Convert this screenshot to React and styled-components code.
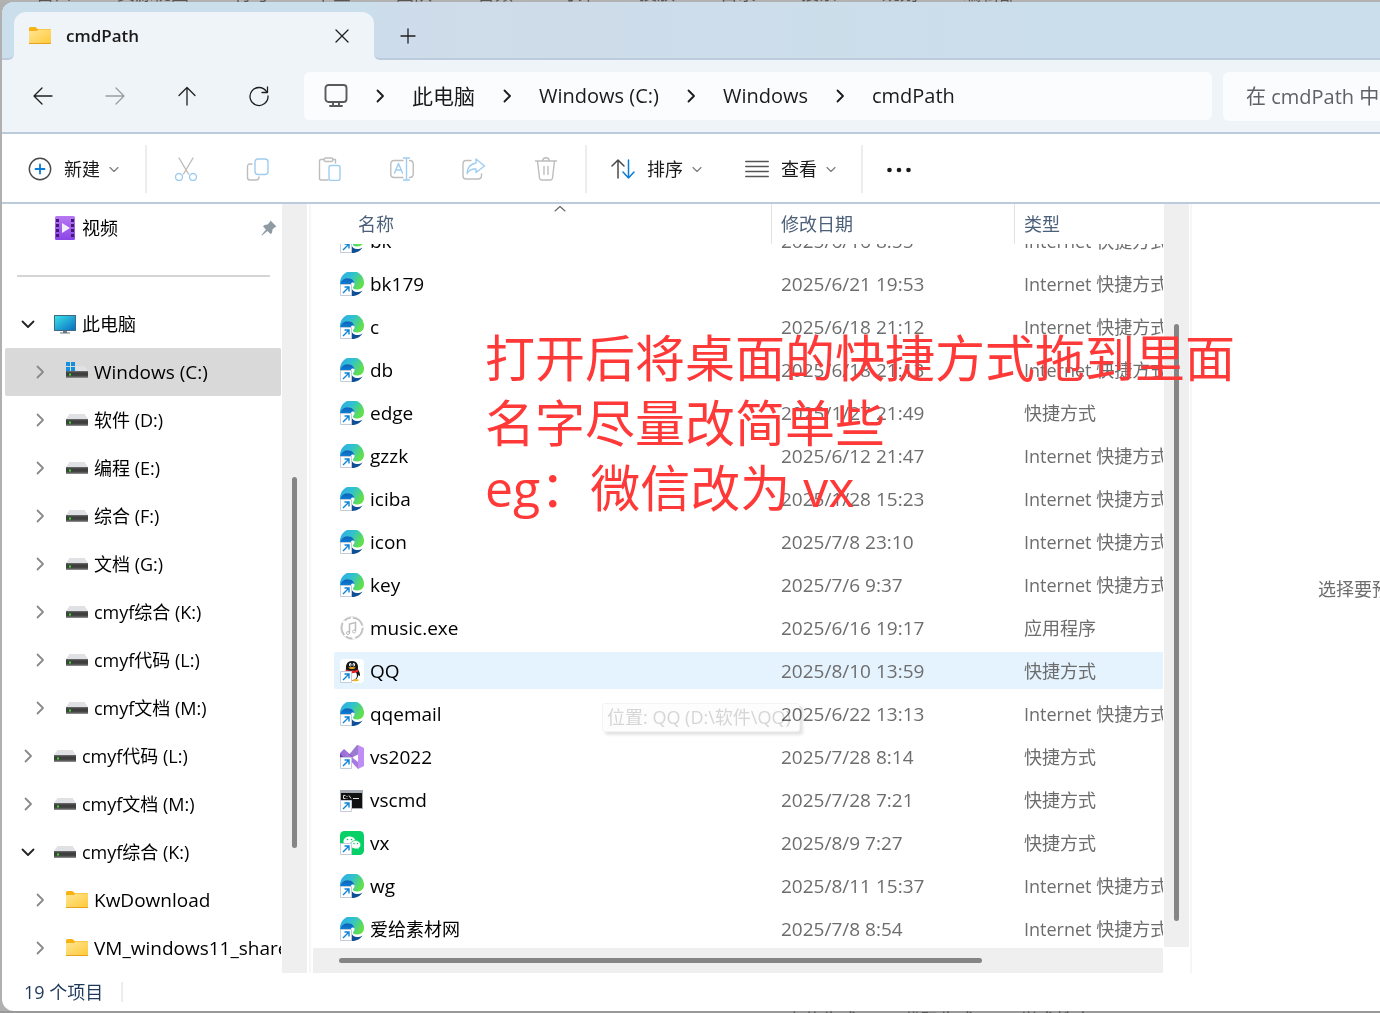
import React from "react";
import styled, { createGlobalStyle, css } from "styled-components";

const GlobalStyle = createGlobalStyle`
  *, *::before, *::after { box-sizing: border-box; }
  body {
    margin: 0;
    overflow: hidden;
    background: #b0b0b0;
    font-family: "Open Sans", "Noto Sans CJK SC", sans-serif;
    font-size: 18px;
    line-height: 24px;
    color: #000;
  }
  button, input { font: inherit; color: inherit; }
  svg { display: block; flex: none; }
`;

/* ---------- desktop and window shell ---------- */

const Desktop = styled.div`
  position: relative;
  display: flex;
  flex-direction: column;
  height: 100vh;
`;

const Sliver = styled.div`
  display: flex;
  gap: 45px;
  height: 2px;
  padding-left: ${(p) => p.$indent}px;
  overflow: hidden;
  white-space: nowrap;
  color: #555;
  background: ${(p) => (p.$low ? "#999" : "#b2b2b2")};
  align-items: ${(p) => (p.$low ? "flex-start" : "flex-end")};
  line-height: 18px;
`;

const Window = styled.main`
  flex: 1;
  min-height: 0;
  display: flex;
  flex-direction: column;
  margin-left: 2px;
  background: #fff;
  border-radius: 12px 0 0 12px;
  overflow: hidden;
`;

const IconButton = styled.button`
  display: flex;
  align-items: center;
  justify-content: center;
  flex: none;
  width: ${(p) => p.$w || 24}px;
  height: ${(p) => p.$h || 24}px;
  padding: 0;
  border: 0;
  background: none;
`;

/* ---------- tab strip ---------- */

const TabStrip = styled.header`
  display: flex;
  align-items: flex-end;
  flex: none;
  height: 58px;
  background: linear-gradient(#cbdeeb 0 44px, #eff4f9 44px);
`;

const StripStart = styled.div`
  flex: 0 0 12px;
  align-self: stretch;
  background: #cbdeeb;
  border-bottom: 2px solid #bccbdd;
  border-bottom-right-radius: 6px;
`;

const StripRest = styled.div`
  flex: 1;
  align-self: stretch;
  display: flex;
  align-items: center;
  padding: 12px 0 0 16px;
  background: linear-gradient(90deg, #cddceb 0, #cfdcea 10%, #cbdeeb 65%, #cadeeb 100%);
  border-bottom: 2px solid #bccbdd;
  border-bottom-left-radius: 6px;
`;

const Tab = styled.div`
  display: flex;
  align-items: center;
  flex: none;
  width: 360px;
  height: 48px;
  padding: 0 20px 0 14px;
  background: #eff4f9;
  border-radius: 12px 12px 0 0;
`;

const TabTitle = styled.span`
  flex: 1;
  padding-left: 14px;
  font-size: 17px;
  font-weight: 600;
  color: #1a1a1a;
`;

/* ---------- navigation bar ---------- */

const NavBar = styled.nav`
  display: flex;
  align-items: center;
  flex: none;
  height: 74px;
  padding: 0 0 0 5px;
  background: #eff4f9;
  border-bottom: 2px solid #bccbdb;
`;

const Address = styled.div`
  display: flex;
  align-items: center;
  flex: 1;
  min-width: 0;
  height: 48px;
  margin: 0 11px 0 9px;
  padding-left: 20px;
  background: #fbfcfe;
  border-radius: 6px;
`;

const Crumb = styled.a`
  font-size: ${(p) => (p.$cjk ? 21 : 20)}px;
  color: #1a1a1a;
  text-decoration: none;
  white-space: nowrap;
`;

const CrumbArrow = styled.span`
  display: flex;
  justify-content: center;
  width: 64px;
`;

const Search = styled.input`
  width: 157px;
  height: 49px;
  padding: 0 0 0 23px;
  border: 0;
  border-radius: 6px 0 0 6px;
  outline: 0;
  background: #fbfcfe;
  font-size: 20px;
  &::placeholder { color: #5f6164; opacity: 1; }
`;

/* ---------- command bar ---------- */

const CommandBar = styled.div`
  display: flex;
  align-items: center;
  flex: none;
  height: 70px;
  padding: 2px 0 0 26px;
  border-bottom: 2px solid #bccbdb;
`;

const Command = styled.button`
  display: flex;
  align-items: center;
  gap: 12px;
  height: 48px;
  padding: 0;
  border: 0;
  background: none;
  color: #1a1a1a;
  white-space: nowrap;
`;

const Label = styled.span`
  display: flex;
  align-items: center;
  gap: 8px;
`;

const Divider = styled.span`
  flex: none;
  width: 2px;
  height: ${(p) => p.$h || 48}px;
  margin: 0 ${(p) => p.$after || 0}px 0 ${(p) => p.$before || 0}px;
  background: #ededed;
`;

const CommandGroup = styled.div`
  display: flex;
  gap: ${(p) => p.$gap || 0}px;
`;

/* ---------- panes ---------- */

const Panes = styled.div`
  display: flex;
  flex: 1;
  min-height: 0;
`;

const Sidebar = styled.aside`
  display: flex;
  flex: 0 0 309px;
  border-right: 2px solid #f6f6f6;
`;

const Tree = styled.ul`
  flex: 0 0 280px;
  margin: 0;
  padding: 0;
  list-style: none;
  overflow: hidden;
`;

const TreeRow = styled.li`
  display: flex;
  align-items: center;
  height: 48px;
  margin: 0 1px 0 3px;
  padding-left: ${(p) => 16 + p.$level * 12}px;
  padding-right: 4px;
  border-radius: 2px;
  white-space: nowrap;
  overflow: hidden;
  background: ${(p) => (p.$selected ? "#d9d9d9" : "none")};
`;

const TreeIcon = styled.span`
  display: flex;
  justify-content: center;
  flex: none;
  width: 24px;
  margin: 0 5px 0 18px;
`;

const TreeLabel = styled.a`
  flex: 1;
  color: #000;
  text-decoration: none;
  font-size: ${(p) => (p.$latin ? 19 : 18)}px;
`;

const TreeRule = styled.li`
  display: flex;
  align-items: center;
  height: 48px;
  padding: 0 12px 0 15px;
  &::before { content: ""; flex: 1; height: 2px; background: #d5d5d5; }
`;

const Track = styled.div`
  display: grid;
  flex: none;
  background: #efefef;
  ${(p) =>
    p.$flat
      ? css`
          height: 25px;
          padding: 10px 0;
          grid-template-columns: ${p.$parts};
          & > span { grid-column: 2; }
        `
      : css`
          width: 25px;
          padding: 0 10px;
          grid-template-rows: ${p.$parts};
          & > span { grid-row: 2; }
        `}
`;

const Thumb = styled.span`
  border-radius: 3px;
  background: #858585;
`;

const ListPane = styled.section`
  display: flex;
  flex: 1;
  min-width: 0;
`;

const ListScroll = styled.div`
  display: flex;
  flex-direction: column;
  padding-bottom: 26px;
  & > div { flex: 1; }
`;

const ListMain = styled.div`
  display: flex;
  flex-direction: column;
  flex: 1;
  min-width: 0;
  margin: 0 1px 0 2px;
`;

const FileTable = styled.table`
  display: flex;
  flex-direction: column;
  flex: 1;
  min-height: 0;
  border-spacing: 0;
`;

const gridRow = css`
  display: grid;
  grid-template-columns: minmax(0, 1fr) 243px 149px;
  margin-left: 21px;
`;

const HeadRow = styled.tr`
  ${gridRow}
  height: 40px;
`;

const HeadCell = styled.th`
  display: flex;
  flex-direction: column;
  padding: 0 0 0 ${(p) => (p.$first ? 24 : 9)}px;
  border-left: ${(p) => (p.$first ? "0" : "1px solid #e2e2e2")};
  font-weight: 400;
  text-align: left;
  line-height: 24px;
  color: #4c607a;
`;

const SortMark = styled.span`
  display: flex;
  justify-content: center;
  height: 8px;
  padding: 1px 9px 0 0;
`;

const FileBody = styled.tbody`
  display: block;
  flex: 1;
  min-height: 0;
  overflow: hidden;
`;

const FileRow = styled.tr`
  ${gridRow}
  height: 37px;
  margin-bottom: 6px;
  border-radius: 2px 0 0 2px;
  background: ${(p) => (p.$hover ? "#e5f3ff" : "none")};
  &:first-child { margin-top: -22px; }
`;

const FileCell = styled.td`
  display: flex;
  align-items: center;
  gap: 6px;
  padding: 0 0 0 ${(p) => (p.$name ? 6 : 10)}px;
  overflow: hidden;
  white-space: nowrap;
  color: ${(p) => (p.$name ? "#000" : "#6d6d6d")};
  font-size: ${(p) => (p.$latin ? 19 : 18)}px;
`;

const Preview = styled.aside`
  display: flex;
  align-items: center;
  flex: 0 0 190px;
  margin-left: 1px;
  padding-left: 126px;
  border-left: 2px solid #f6f6f6;
  overflow: hidden;
  white-space: nowrap;
  color: #6d6d6d;
`;

const StatusBar = styled.footer`
  display: flex;
  align-items: center;
  flex: none;
  height: 38px;
  padding-left: 22px;
  color: #1e395b;
`;

/* ---------- things lying over the window ---------- */

const Note = styled.p`
  position: absolute;
  left: 485px;
  top: 326px;
  margin: 0;
  font-size: 50px;
  line-height: 65px;
  color: #ff3838;
  white-space: pre;
  pointer-events: none;
`;

const Tooltip = styled.div`
  position: absolute;
  left: 602px;
  top: 703px;
  padding: 1px 8px 2px 4px;
  border: 1px solid #f3f3f3;
  border-radius: 3px;
  background: #fdfdfd;
  box-shadow: 3px 3px 3px #e4e4e4;
  color: #d6d6d6;
  mix-blend-mode: multiply;
  white-space: nowrap;
`;

/* ---------- icons ---------- */

const Line = ({ w = 24, h = w, box, color = "#1f1f1f", sw = 1.3, children }) => (
  <svg width={w} height={h} viewBox={box || `0 0 ${w} ${h}`} fill="none" stroke={color}
    strokeWidth={sw} strokeLinecap="round" strokeLinejoin="round" aria-hidden="true">
    {children}
  </svg>
);

const Chevron = ({ dir, color = "#8a8a8a", sw = 1.8 }) =>
  dir === "down" ? (
    <Line w={14} h={14} color={color} sw={sw}><path d="M1.5 4.5 7 10l5.500-5.500" /></Line>
  ) : (
    <Line w={14} h={14} color={color} sw={sw}><path d="M4.500 1.500 10 7l-5.500 5.500" /></Line>
  );

const MiniDown = () => (
  <Line w={12} h={12} color="#777" sw={1.1}><path d="M2 4.500l4 4 4-4" /></Line>
);

const Folder = () => (
  <svg width="24" height="20" viewBox="0 0 24 20" aria-hidden="true">
    <path d="M1 2.500Q1 1 2.500 1H7q1.300 0 2 1.500L9.500 3H22q1 0 1 1v13H1z" fill="#f7b314" />
    <path d="M1 5h8l1.500-1.500H23V17H1z" fill="url(#folderFace)" />
    <path d="M1 17h22v1H1z" fill="#e9a21a" />
  </svg>
);

const Drive = ({ system }) => (
  <svg width="24" height="20" viewBox="0 0 24 20" aria-hidden="true">
    <path d="M4.500 4h15L23 9H1z" fill="#dfe1e4" />
    <path d="M1 9h22v7H1z" fill="url(#driveFace)" />
    <path d="M4 11.500h2v2H4z" fill="#2be62b" />
    {system && (
      <>
        <path d="M0 0h11v9H0z" fill="#d9d9d9" />
        <path d="M1 0h4v4H1zM6 0h4v4H6zM1 5h4v4H1zM6 5h4v4H6z" fill="#1490df" />
      </>
    )}
  </svg>
);

const Monitor = () => (
  <svg width="24" height="20" viewBox="0 0 24 20" aria-hidden="true">
    <path d="M1 1h22v16H1z" fill="#416a82" />
    <path d="M2 2h20v14H2z" fill="url(#screen)" />
    <path d="M10 17h4v1.500h3V19.500H7V18.500h3z" fill="#6b7680" />
  </svg>
);

const Video = () => (
  <svg width="22" height="24" viewBox="0 0 22 24" aria-hidden="true">
    <rect x="1" width="20" height="24" rx="1.500" fill="url(#videoFace)" />
    <path d="M2 3h3v3H2zM2 8h3v3H2zM2 13h3v3H2zM2 18h3v3H2zM17 3h3v3h-3zM17 8h3v3h-3zM17 13h3v3h-3zM17 18h3v3h-3z" fill="#431a78" />
    <path d="M8 7l8 5-8 5z" fill="#f3ecfb" />
  </svg>
);

const Pin = () => (
  <svg width="16" height="16" viewBox="0 0 16 16" aria-hidden="true">
    <path d="M9.500.5 15.500 6.500 13.500 7.500 11.500 9.500 11 13 9.500 14 6.500 11 1 15.500.5 15 5 9.500 2 6.500 3.500 5 6.500 4.500 8.500 2.500z" fill="#8f9ba3" />
  </svg>
);

const Shortcut = () => (
  <g>
    <path d="M.5 12.500h11v11H.5z" fill="#fff" stroke="#c3ccd8" />
    <path d="M3 21l5.500-5.500M4.500 15h4.500v4.500" fill="none" stroke="#0b84d8" strokeWidth="1.400" />
  </g>
);

const fileArt = {
  edge: (
    <>
      <path d="M0 11A12 12 0 0 1 24 11C24 15.500 20.500 17.500 17 17.500 14 17.500 12.800 16.500 13 15.300 13.300 14.500 14.500 14 14.500 12 14.500 9 11.500 6 7 6.500 3.500 7 .8 9 0 12z" fill="url(#edgeTop)" />
      <path d="M0 12C.8 8.600 4 6.200 7.500 6.200c4.500 0 6.500 2.300 7 5-1.200-1.200-3-.8-3.500.6L10.500 16 12 24A12 12 0 0 1 0 12z" fill="url(#edgeLeft)" />
      <path d="M11 15C12 18.500 14 20 17 20c2 0 4-.5 5.500-1.500C20 22.500 16 24 12 24 10 21 10 18 11 15z" fill="#0f4f97" />
    </>
  ),
  qq: (
    <>
      <rect width="24" height="24" rx="4" fill="#fff" />
      <path d="M12 2c4 0 6 2.800 6 6v2.500c1 1.500 2.300 4 2 6-.3 1-1.200 0-1.700-.8C18 19 16 21.500 12 21.500S6 19 5.700 15.700L6 8c0-3.200 2-6 6-6z" fill="#151515" />
      <ellipse cx="12.500" cy="16.500" rx="4.500" ry="4.700" fill="#fff" />
      <ellipse cx="10.300" cy="5.800" rx="1.300" ry="1.800" fill="#fff" />
      <ellipse cx="13.800" cy="5.800" rx="1.300" ry="1.800" fill="#fff" />
      <circle cx="10.600" cy="6" r=".6" /><circle cx="13.500" cy="6" r=".6" />
      <path d="M8 8.700q4-1.200 8 0-4 2.500-8 0zM13 20.800q3.500-1.500 6 .2-1 2-6 1z" fill="#f5b21b" />
      <path d="M5.800 10.200q6.200 3 12.500 0v2.300q-6 3.300-12.500 0z" fill="#e8242c" />
    </>
  ),
  vs: (
    <>
      <path d="M0 8l4-4 9 8-9 8-4-3z" fill="#9b6fd6" />
      <path d="M0 9l5 5-5 4z" fill="#5b3b8e" />
      <path d="M3 17L17 0l2 1v8z" fill="#7a4fc0" opacity=".75" />
      <path d="M4 6l14 11v7L7 12z" fill="#a77ae0" />
      <path d="M18 0l6 3v18l-6 3z" fill="#c08cf5" />
    </>
  ),
  cmd: (
    <>
      <path d="M0 2h23v19H0z" fill="#a6adb5" />
      <path d="M1 5h21v15H1z" fill="#111" />
      <path d="M5.500 7.500H3.500v3h2M7 8v1M7 10v.6M9 7.500l2 3M13 10.500h6" stroke="#ddd" fill="none" />
    </>
  ),
  wechat: (
    <>
      <rect width="24" height="24" rx="4.500" fill="#06d066" />
      <path d="M9.500 5.500c3.500 0 6 2.200 6 4.900s-2.700 4.800-6 4.800L5.500 16.500l.5-2C4.500 13.500 3.500 12 3.500 10.400c0-2.700 2.500-4.900 6-4.900z" fill="#fff" />
      <path d="M15.500 9.500c3 0 5.200 1.900 5.200 4.200 0 1.400-.8 2.600-2 3.400l.3 1.700-1.800-1c-3.800.6-6.900-1.400-6.900-4.100 0-2.300 2.200-4.200 5.200-4.200z" fill="#fff" stroke="#06d066" strokeWidth=".7" />
      <g fill="#06b95b"><circle cx="7.500" cy="8.500" r=".8" /><circle cx="11.500" cy="8.500" r=".8" /><circle cx="14" cy="12.500" r=".7" /><circle cx="17.500" cy="12.500" r=".7" /></g>
    </>
  ),
  music: (
    <g fill="none" stroke="#bdbdbd">
      <circle cx="12" cy="12" r="10.500" strokeWidth="1.800" strokeDasharray="13 3 7 2" />
      <circle cx="12" cy="12" r="11.500" stroke="#dcdcdc" strokeWidth=".7" />
      <path d="M9.500 17V8l6-1.500V15" strokeWidth="1.500" />
      <circle cx="8" cy="17" r="1.500" /><circle cx="14" cy="15.500" r="1.500" />
    </g>
  ),
};

const FileIcon = ({ kind }) => (
  <svg width="24" height="24" viewBox="0 0 24 24" aria-hidden="true">
    {fileArt[kind]}
    {kind !== "music" && <Shortcut />}
  </svg>
);

const GradientDefs = styled.svg`
  position: absolute;
`;

const Gradients = () => (
  <GradientDefs width="0" height="0" aria-hidden="true">
    <defs>
      <linearGradient id="folderFace" x2="1" y2="1"><stop stopColor="#ffe596" /><stop offset="1" stopColor="#ffca3a" /></linearGradient>
      <linearGradient id="driveFace" x2="0" y2="1"><stop stopColor="#707070" /><stop offset=".3" stopColor="#3b3b3b" /><stop offset=".7" stopColor="#454545" /><stop offset="1" stopColor="#999" /></linearGradient>
      <linearGradient id="screen" x2="1" y2="1"><stop stopColor="#3ae0e6" /><stop offset="1" stopColor="#0a6fc4" /></linearGradient>
      <linearGradient id="videoFace" x2="0" y2="1"><stop stopColor="#b878f2" /><stop offset="1" stopColor="#8a45e6" /></linearGradient>
      <linearGradient id="edgeTop" x2="1" y2=".5"><stop stopColor="#32a8e8" /><stop offset=".5" stopColor="#2fc1d2" /><stop offset="1" stopColor="#62e04c" /></linearGradient>
      <linearGradient id="edgeLeft" x2="0" y2="1"><stop stopColor="#0b62b8" /><stop offset=".5" stopColor="#0f8be0" /><stop offset="1" stopColor="#1578cc" /></linearGradient>
    </defs>
  </GradientDefs>
);

const GREY = "#bdbdbd";
const SKY = "#9fcdf0";

const editIcons = [
  ["剪切", <><path d="M5 1l9.500 16M19 1L9.500 17" stroke={GREY} /><circle cx="5" cy="20" r="3.500" /><circle cx="19" cy="20" r="3.500" /></>],
  ["复制", <><path d="M6 7H4Q1.500 7 1.500 9.500v11Q1.500 23 4 23h6q3 0 3-3" stroke={GREY} /><rect x="9" y="2" width="13" height="15.500" rx="3" /></>],
  ["粘贴", <><path d="M10 23H3q-1.500 0-1.500-1.500V4Q1.500 2.500 3 2.500h3M15 2.500h2.500V6" stroke={GREY} /><rect x="6" y="1" width="9" height="3.500" rx="1.700" stroke={GREY} /><rect x="11" y="8.500" width="11" height="15" rx="2" /></>],
  ["重命名", <><path d="M13 3.500H4Q.8 3.500.8 7v10Q.8 20.500 4 20.500h9M19.500 3.500q3.700 0 3.700 3.500v10q0 3.500-3.700 3.500" stroke={GREY} /><path d="M4.500 16l4-9.500 4 9.500M6 13h5M13.500 1h6M16.500 1v22M13.500 23h6" /></>],
  ["共享", <><path d="M9 3.500H4Q1 3.500 1 7v12q0 3 3 3h12q3.500 0 3.500-3.500V17" stroke={GREY} /><path d="M14 2l8.500 7L14 15.500V12q-6-.5-9 4.500.5-9 9-10.500z" /></>],
  ["删除", <g stroke={GREY}><path d="M1.500 4h21M8.500 4Q9 .8 12 .8T15.500 4M3.500 4l2 17q.3 2 2 2h9q1.700 0 2-2l2-17M10 9.500v8M14 9.500v8" /></g>],
];

/* ---------- data ---------- */

const tree = [
  { t: "此电脑", level: 0, icon: "pc", open: true },
  { t: "Windows (C:)", level: 1, icon: "system", selected: true },
  { t: "软件 (D:)", level: 1 },
  { t: "编程 (E:)", level: 1 },
  { t: "综合 (F:)", level: 1 },
  { t: "文档 (G:)", level: 1 },
  { t: "cmyf综合 (K:)", level: 1 },
  { t: "cmyf代码 (L:)", level: 1 },
  { t: "cmyf文档 (M:)", level: 1 },
  { t: "cmyf代码 (L:)", level: 0 },
  { t: "cmyf文档 (M:)", level: 0 },
  { t: "cmyf综合 (K:)", level: 0, open: true },
  { t: "KwDownload", level: 1, icon: "folder" },
  { t: "VM_windows11_share", level: 1, icon: "folder" },
];

const NET = "Internet 快捷方式";
const LNK = "快捷方式";
const files = [
  ["edge", "bk", "2025/6/16 8:55", NET],
  ["edge", "bk179", "2025/6/21 19:53", NET],
  ["edge", "c", "2025/6/18 21:12", NET],
  ["edge", "db", "2025/6/18 21:13", NET],
  ["edge", "edge", "2025/1/27 21:49", LNK],
  ["edge", "gzzk", "2025/6/12 21:47", NET],
  ["edge", "iciba", "2025/1/28 15:23", NET],
  ["edge", "icon", "2025/7/8 23:10", NET],
  ["edge", "key", "2025/7/6 9:37", NET],
  ["music", "music.exe", "2025/6/16 19:17", "应用程序"],
  ["qq", "QQ", "2025/8/10 13:59", LNK],
  ["edge", "qqemail", "2025/6/22 13:13", NET],
  ["vs", "vs2022", "2025/7/28 8:14", LNK],
  ["cmd", "vscmd", "2025/7/28 7:21", LNK],
  ["wechat", "vx", "2025/8/9 7:27", LNK],
  ["edge", "wg", "2025/8/11 15:37", NET],
  ["edge", "爱给素材网", "2025/7/8 8:54", NET],
];

const isLatin = (s) => /^[\x20-\x7e]+$/.test(s);

const treeIcon = (kind) => {
  if (kind === "pc") return <Monitor />;
  if (kind === "folder") return <Folder />;
  return <Drive system={kind === "system"} />;
};

/* ---------- parts ---------- */

const Toolbar = () => (
  <CommandBar role="toolbar" aria-label="命令">
    <Command>
      <Line w={24} color="#4a4a4a" sw={1.4}><circle cx="12" cy="12" r="10.700" /><path d="M12 7.500v9M7.500 12h9" stroke="#0b7bd3" strokeWidth="1.800" /></Line>
      <Label>新建<MiniDown /></Label>
    </Command>
    <Divider $before={25} $after={3} />
    <CommandGroup>
      {editIcons.map(([name, art]) => (
        <IconButton key={name} $w={72} $h={48} aria-label={name} disabled>
          <Line w={24} color={SKY} sw={1.4}>{art}</Line>
        </IconButton>
      ))}
    </CommandGroup>
    <Divider $before={3} $after={24} />
    <CommandGroup $gap={42}>
      <Command>
        <Line w={24} color="#4a4a4a" sw={1.5}><path d="M7 21V3M1 9l6-6 6 6" /><path d="M17.500 3v18M12 15l5.500 6 5.500-6" stroke="#0b7bd3" /></Line>
        <Label>排序<MiniDown /></Label>
      </Command>
      <Command>
        <Line w={24} color="#555" sw={1.3}><path d="M.7 4.500h22.600M.7 9.500h22.600M.7 14.500h22.600M.7 19.500h22.600" /></Line>
        <Label>查看<MiniDown /></Label>
      </Command>
    </CommandGroup>
    <Divider $before={24} $after={24} />
    <IconButton aria-label="更多">
      <svg width="24" height="24" viewBox="0 0 24 24" fill="#1a1a1a"><circle cx="2.500" cy="13" r="2.300" /><circle cx="12" cy="13" r="2.300" /><circle cx="21.500" cy="13" r="2.300" /></svg>
    </IconButton>
  </CommandBar>
);

const Navigation = () => (
  <NavBar aria-label="导航">
    <IconButton $w={72} $h={48} aria-label="后退"><Line><path d="M21 12H3.500M11 4l-8 8 8 8" /></Line></IconButton>
    <IconButton $w={72} $h={48} aria-label="前进" disabled><Line color="#9a9ea3"><path d="M3 12h17.500M13 4l8 8-8 8" /></Line></IconButton>
    <IconButton $w={72} $h={48} aria-label="向上"><Line><path d="M12 21V3.500M4 11.500l8-8 8 8" /></Line></IconButton>
    <IconButton $w={72} $h={48} aria-label="刷新"><Line><path d="M19.500 7.500A9 9 0 1 0 21 12M20.500 3v5.500H15" /></Line></IconButton>
    <Address>
      <Line w={24} color="#5a5a5a" sw={1.9}><rect x="1.500" y="1" width="21" height="17" rx="3" /><path d="M9 18v4M15 18v4M6 22h12" /></Line>
      <CrumbArrow><Chevron color="#1a1a1a" /></CrumbArrow>
      <Crumb href="#pc" $cjk>此电脑</Crumb>
      <CrumbArrow><Chevron color="#1a1a1a" /></CrumbArrow>
      <Crumb href="#c">Windows (C:)</Crumb>
      <CrumbArrow><Chevron color="#1a1a1a" /></CrumbArrow>
      <Crumb href="#windows">Windows</Crumb>
      <CrumbArrow><Chevron color="#1a1a1a" /></CrumbArrow>
      <Crumb href="#cmdpath">cmdPath</Crumb>
    </Address>
    <Search type="text" placeholder="在 cmdPath 中搜索" aria-label="搜索" />
  </NavBar>
);

const SideTree = () => (
  <Sidebar>
    <Tree>
      <TreeRow $level={0}>
        <IconButton as="span" $w={14} />
        <TreeIcon><Video /></TreeIcon>
        <TreeLabel href="#video">视频</TreeLabel>
        <Pin />
      </TreeRow>
      <TreeRule />
      {tree.map((n, i) => (
        <TreeRow key={i} $level={n.level} $selected={n.selected}>
          <IconButton $w={14} aria-label={n.open ? "折叠" : "展开"}>
            {n.open ? <Chevron dir="down" color="#222" /> : <Chevron />}
          </IconButton>
          <TreeIcon>{treeIcon(n.icon)}</TreeIcon>
          <TreeLabel href="#node" $latin={isLatin(n.t)}>{n.t}</TreeLabel>
        </TreeRow>
      ))}
    </Tree>
    <Track $parts="273fr 371fr 125fr"><Thumb /></Track>
  </Sidebar>
);

const FileList = () => (
  <ListPane>
    <ListMain>
      <FileTable>
        <thead>
          <HeadRow>
            <HeadCell $first>
              <SortMark><Line w={14} h={7} color="#666" sw={1.1}><path d="M2 6l5-4.500L12 6" /></Line></SortMark>
              名称
            </HeadCell>
            <HeadCell><SortMark />修改日期</HeadCell>
            <HeadCell><SortMark />类型</HeadCell>
          </HeadRow>
        </thead>
        <FileBody>
          {files.map(([kind, name, date, type]) => (
            <FileRow key={name} $hover={name === "QQ"}>
              <FileCell $name $latin={isLatin(name)}><FileIcon kind={kind} />{name}</FileCell>
              <FileCell $latin>{date}</FileCell>
              <FileCell>{type}</FileCell>
            </FileRow>
          ))}
        </FileBody>
      </FileTable>
      <Track $flat $parts="26fr 643fr 181fr"><Thumb /></Track>
    </ListMain>
    <ListScroll>
      <Track $parts="120fr 597fr 26fr"><Thumb /></Track>
    </ListScroll>
  </ListPane>
);

export default function App() {
  return (
    <Desktop>
      <GlobalStyle />
      <Gradients />
      <Sliver $indent={36} aria-hidden="true">
        <span>窗口</span><span>资源视图</span><span>符号</span><span>书签</span><span>团队</span><span>音频</span><span>时钟</span><span>投放</span><span>目录</span><span>搜索</span><span>规划</span><span>编辑部</span>
      </Sliver>
      <Window>
        <TabStrip>
          <StripStart />
          <Tab>
            <Folder />
            <TabTitle>cmdPath</TabTitle>
            <IconButton aria-label="关闭标签页"><Line w={24}><path d="M6 6l12 12M18 6L6 18" /></Line></IconButton>
          </Tab>
          <StripRest>
            <IconButton $w={36} aria-label="添加新标签页"><Line w={24}><path d="M12 5v14M5 12h14" /></Line></IconButton>
          </StripRest>
        </TabStrip>
        <Navigation />
        <Toolbar />
        <Panes>
          <SideTree />
          <FileList />
          <Preview>选择要预览的文件。</Preview>
        </Panes>
        <StatusBar>
          19 个项目
          <Divider $h={20} $before={18} />
        </StatusBar>
      </Window>
      <Sliver $low $indent={786} aria-hidden="true">
        <span>上传生成</span><span>代码生成</span><span>学术搜索</span>
      </Sliver>
      <Tooltip role="tooltip">位置: QQ (D:\软件\QQ)</Tooltip>
      <Note>{"打开后将桌面的快捷方式拖到里面\n名字尽量改简单些\neg：微信改为 vx"}</Note>
    </Desktop>
  );
}
